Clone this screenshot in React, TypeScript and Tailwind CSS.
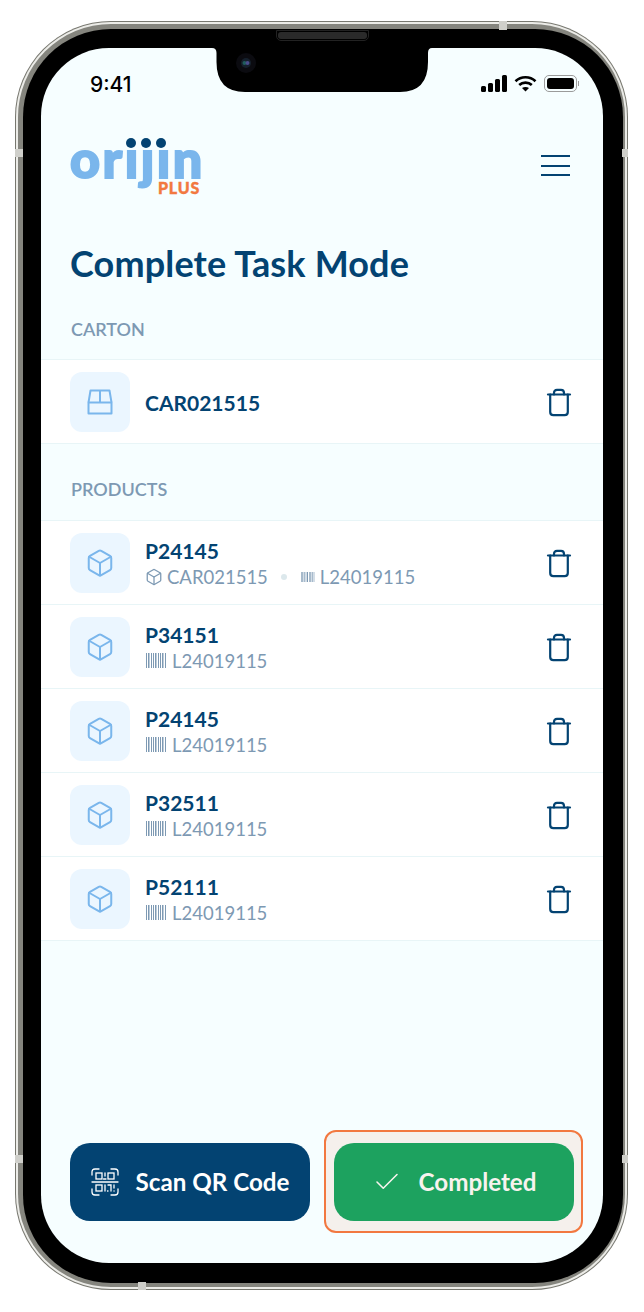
import { Box, Check } from 'lucide-react';

const FONT = "font-['Lato','Liberation_Sans',sans-serif]";

const PRODUCTS = [
  { id: 'P24145', carton: 'CAR021515', lot: 'L24019115' },
  { id: 'P34151', lot: 'L24019115' },
  { id: 'P24145', lot: 'L24019115' },
  { id: 'P32511', lot: 'L24019115' },
  { id: 'P52111', lot: 'L24019115' },
];

function TrashIcon() {
  return (
    <svg width="26" height="30" viewBox="0 0 26 30" fill="none" stroke="#034372" strokeWidth="2.2" strokeLinecap="round" strokeLinejoin="round">
      <path d="M2 7.5H24" />
      <path d="M8 7.5V6C8 4 9 2.8 11 2.8H15C17 2.8 18 4 18 6V7.5" />
      <path d="M4.2 7.5V25C4.2 27 5.4 28.2 7.4 28.2H18.6C20.6 28.2 21.8 27 21.8 25V7.5" />
    </svg>
  );
}

function CartonIcon() {
  return (
    <svg width="26" height="26" viewBox="0 0 26 26" fill="none" stroke="#7AB6EC" strokeWidth="2" strokeLinejoin="round">
      <path d="M1.5 13.5L3.5 1.5H22.5L24.5 13.5" />
      <path d="M1.5 13.5H24.5V24.5H1.5Z" />
      <path d="M13 1.5V13.5" />
    </svg>
  );
}

function BarcodeIcon({ width, height }: { width: number; height: number }) {
  const bars = [0, 2, 5, 7, 9, 12, 14, 16, 19];
  return (
    <svg width={width} height={height} viewBox="0 0 21 15" fill="#7D99B3">
      {bars.map((x, i) => (
        <rect key={x} x={x} y="0" width={i % 3 === 1 ? 1.5 : 1} height="15" />
      ))}
    </svg>
  );
}

function QrIcon() {
  return (
    <svg width="28" height="28" viewBox="0 0 28 28" fill="none" stroke="#fff" strokeWidth="1.3" strokeLinecap="round">
      <path d="M1 7V4C1 2 2 1 4 1H8M20 1H24C26 1 27 2 27 4V7M1 21V24C1 26 2 27 4 27H8M20 27H24C26 27 27 26 27 24V21" />
      <path d="M1 14H27" />
      <rect x="5" y="5" width="6" height="6" />
      <rect x="17" y="5" width="6" height="6" />
      <rect x="5" y="17" width="6" height="6" />
      <path d="M14 5V8M12.5 11H15M14 17V23M17 17H20V23M23 17V20M23 23H23.1M16.5 23H17" />
    </svg>
  );
}

function StatusIcons() {
  return (
    <div className="flex items-center gap-[7px] mb-[3px]">
      <svg width="26" height="17" viewBox="0 0 26 17" fill="#000">
        <rect x="0" y="11" width="5" height="6" rx="1.5" />
        <rect x="7" y="8" width="5" height="9" rx="1.5" />
        <rect x="14" y="4" width="5" height="13" rx="1.5" />
        <rect x="21" y="0" width="5" height="17" rx="1.5" />
      </svg>
      <svg width="23" height="17" viewBox="0 0 23 17" fill="none" stroke="#000" strokeWidth="2.6">
        <path d="M1.5 6.2C7 1 16 1 21.5 6.2" />
        <path d="M5.2 10C8.6 6.8 14.4 6.8 17.8 10" />
        <path d="M11.5 16.6L8 13C10 11.5 13 11.5 15 13Z" fill="#000" stroke="none" />
      </svg>
      <div className="flex items-center gap-[1px]">
        <div className="w-[33px] h-[17px] rounded-[5px] border border-[#9b9b9b] p-[2px]">
          <div className="w-full h-full rounded-[3px] bg-black" />
        </div>
        <div className="w-[1px] h-[5px] bg-[#9b9b9b]" />
      </div>
    </div>
  );
}

function Logo() {
  return (
    <div className={`relative w-[130px] h-[58px] ${FONT}`}>
      {/* the i and j dots are dark blue in the logo, so the text's own dots are clipped off */}
      <span className="absolute left-0 top-[-3px] text-[52px] leading-[46px] font-black text-[#7AB6EC] tracking-[2.5px] [-webkit-text-stroke:2px_#7AB6EC] [clip-path:inset(15px_-5px_-20px_-5px)]">
        orijin
      </span>
      <span className="absolute left-[56px] top-0 w-[10px] h-[10px] rounded-full bg-[#034372]" />
      <span className="absolute left-[71px] top-0 w-[10px] h-[10px] rounded-full bg-[#034372]" />
      <span className="absolute left-[86px] top-0 w-[10px] h-[10px] rounded-full bg-[#034372]" />
      <span className="absolute right-0 top-[43px] text-[16px] leading-[14px] font-black text-[#F27840] tracking-[0.8px] [-webkit-text-stroke:0.4px_#F27840]">
        PLUS
      </span>
    </div>
  );
}

function Row({ icon, title, children }: { icon: React.ReactNode; title: string; children?: React.ReactNode }) {
  return (
    <div className="flex items-center h-[84px] pl-[29px] pr-[31px] bg-white border-b border-[#E8F5F7]">
      <div className="w-[60px] h-[60px] shrink-0 rounded-[12px] bg-[#EBF6FF] flex items-center justify-center">
        {icon}
      </div>
      <div className="ml-[15px] pt-[2px] flex-1 flex flex-col gap-[2px]">
        <p className="text-[21px] leading-[24px] font-bold text-[#034372]">{title}</p>
        {children}
      </div>
      <TrashIcon />
    </div>
  );
}

function Bezel() {
  return (
    <>
      <div className="absolute left-[484px] top-0 w-[8px] h-[9px] bg-[#cfcfca]" />
      <div className="absolute left-0 top-[128px] w-[8px] h-[8px] bg-[#cfcfca]" />
      <div className="absolute right-0 top-[128px] w-[6px] h-[8px] bg-[#cfcfca]" />
      <div className="absolute left-0 top-[1134px] w-[8px] h-[8px] bg-[#cfcfca]" />
      <div className="absolute right-0 top-[1134px] w-[6px] h-[8px] bg-[#cfcfca]" />
      <div className="absolute left-[123px] bottom-0 w-[8px] h-[8px] bg-[#cfcfca]" />
      <div className="absolute left-[261px] top-[9px] w-[93px] h-[11px] rounded-b-[5px] border border-[#222] bg-[#000] p-[1px]">
        <div className="w-full h-full rounded-[3px] bg-[#2a2a2a]" />
      </div>
    </>
  );
}

export default function App() {
  return (
    <div className={`w-[644px] h-[1312px] bg-white pl-[15px] pt-[21px] ${FONT}`}>
      <div className="relative w-[613px] h-[1269px] rounded-[96px] bg-[#77776f] p-[1px]">
        <div className="w-full h-full rounded-[95px] bg-[#ecece8] p-[2px]">
          <div className="w-full h-full rounded-[93px] bg-[#85857e] pl-[5px] pt-[5px] pr-[2px] pb-[4px]">
            <div className="w-full h-full rounded-[88px] bg-black pl-[18px] pt-[19px] pr-[20px] pb-[20px]">
              <div className="relative w-full h-full rounded-[68px] overflow-hidden bg-[#F6FEFF] flex flex-col">
                {/* notch */}
                <svg className="absolute left-[171px] top-0" width="220" height="44" viewBox="0 0 220 44" fill="#000">
                  <path d="M0 0H220Q216 0 216 5V14Q216 44 188 44H33Q4.5 44 4.5 14V5Q4.5 0 0 0Z" />
                </svg>
                <svg className="absolute left-[195px] top-[5px]" width="20" height="20" viewBox="0 0 20 20">
                  <circle cx="10" cy="10" r="10" fill="#0b0b10" />
                  <circle cx="10" cy="10" r="5" fill="#15202c" />
                  <circle cx="8.5" cy="10" r="2" fill="#1f5c5c" />
                  <circle cx="11.5" cy="10" r="2" fill="#4a4c8c" />
                </svg>

                {/* status bar */}
                <div className="flex items-center justify-between h-[20px] mt-[27px] pl-[49px] pr-[24px]">
                  <span className="font-['Inter',sans-serif] text-[21px] leading-[20px] font-medium text-black">9:41</span>
                  <StatusIcons />
                </div>

                {/* header */}
                <div className="flex items-start justify-between mt-[43px] pl-[29px] pr-[33px]">
                  <Logo />
                  <div className="mt-[17px] w-[29px] flex flex-col gap-[7.5px]">
                    <div className="h-[2px] bg-[#034372]" />
                    <div className="h-[2px] bg-[#034372]" />
                    <div className="h-[2px] bg-[#034372]" />
                  </div>
                </div>

                <h1 className="mt-[45px] pl-[29px] text-[36px] leading-[44px] font-bold tracking-[0.15px] text-[#034372]">Complete Task Mode</h1>

                <p className="mt-[32px] pl-[30px] text-[18px] leading-[24px] font-semibold text-[#7D99B3]">CARTON</p>
                <div className="mt-[18px] border-t border-[#E8F5F7]">
                  <Row icon={<CartonIcon />} title="CAR021515" />
                </div>

                <p className="mt-[33px] pl-[30px] text-[18px] leading-[24px] font-semibold text-[#7D99B3]">PRODUCTS</p>
                <div className="mt-[19px] border-t border-[#E8F5F7]">
                  {PRODUCTS.map((p, i) => (
                    <Row key={i} icon={<Box size={30} strokeWidth={1.6} color="#7AB6EC" />} title={p.id}>
                      <div className="flex items-center text-[18.5px] leading-[24px] text-[#7D99B3]">
                        {p.carton ? (
                          <>
                            <Box size={18} strokeWidth={1.7} className="mr-[4px]" />
                            <span>{p.carton}</span>
                            <span className="ml-[13px] mr-[13px] w-[6px] h-[6px] rounded-full bg-[#DCE8EC]" />
                            <BarcodeIcon width={16} height={10} />
                            <span className="ml-[4px]">{p.lot}</span>
                          </>
                        ) : (
                          <>
                            <span className="ml-[1px] flex">
                              <BarcodeIcon width={21} height={15} />
                            </span>
                            <span className="ml-[5px]">{p.lot}</span>
                          </>
                        )}
                      </div>
                    </Row>
                  ))}
                </div>

                {/* actions */}
                <div className="mt-auto pb-[42px] pl-[29px] flex gap-[24px]">
                  <button className="w-[240px] h-[78px] rounded-[20px] bg-[#034372] flex items-center justify-center gap-[17px] text-[24.2px] font-bold text-white">
                    <QrIcon />
                    Scan QR Code
                  </button>
                  <div className="relative w-[240px] h-[78px]">
                    <div className="absolute -left-[10px] -right-[9px] -top-[13px] -bottom-[12px] rounded-[12px] border-2 border-[#F27840] bg-[#F5F0EC]" />
                    <button className="relative w-full h-full rounded-[20px] bg-[#1DA25F] flex items-center justify-center gap-[17px] text-[24.2px] font-bold text-[#F8F3EE]">
                      <Check size={30} strokeWidth={1.25} />
                      Completed
                    </button>
                  </div>
                </div>
              </div>
            </div>
          </div>
        </div>
        <Bezel />
      </div>
    </div>
  );
}
